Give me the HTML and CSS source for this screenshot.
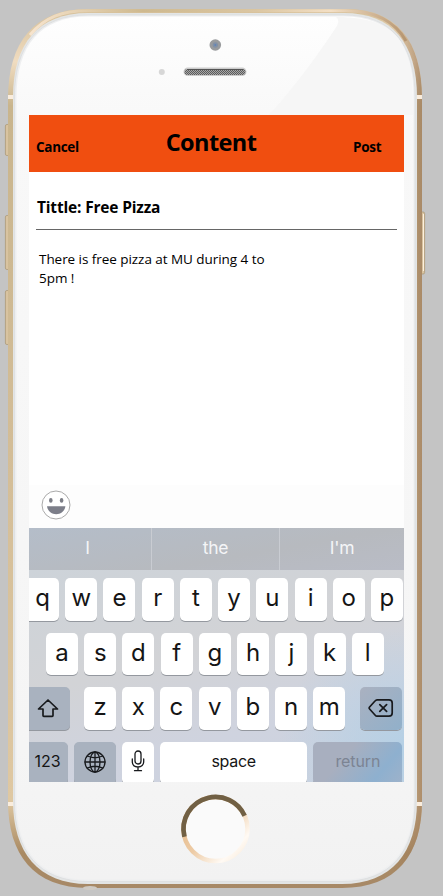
FILE: index.html
```html
<!DOCTYPE html>
<html lang="en">
<head>
<meta charset="utf-8">
<title>Content</title>
<link rel="stylesheet" href="styles.css">
</head>
<body>
<svg class="device" viewBox="0 0 443 896" aria-hidden="true">
  <defs>
    <linearGradient id="gold" x1="0" y1="0" x2="0" y2="1">
      <stop offset="0" stop-color="#d5bf98"/><stop offset=".06" stop-color="#f0dcc0"/><stop offset=".11" stop-color="#c9b58d"/><stop offset=".5" stop-color="#d3bd97"/><stop offset=".9" stop-color="#dfc8a2"/><stop offset=".96" stop-color="#a98a63"/><stop offset="1" stop-color="#a78967"/>
    </linearGradient>
    <linearGradient id="side" x1="0" y1="0" x2="1" y2="0">
      <stop offset="0" stop-color="#9d7a58" stop-opacity="0"/><stop offset=".93" stop-color="#9d7a58" stop-opacity="0"/><stop offset="1" stop-color="#9d7a58" stop-opacity=".75"/>
    </linearGradient>
    <linearGradient id="top" x1="0" y1="0" x2="1" y2="0">
      <stop offset="0" stop-color="#f7e4cd"/><stop offset=".3" stop-color="#ceb98f"/><stop offset=".6" stop-color="#dbc6a2"/><stop offset=".8" stop-color="#f3dfc5"/><stop offset="1" stop-color="#b69570"/>
    </linearGradient>
    <linearGradient id="face" x1="0" y1="0" x2="0" y2="1">
      <stop offset="0" stop-color="#fefefe"/><stop offset=".13" stop-color="#f8f8f8"/><stop offset=".85" stop-color="#f5f5f5"/><stop offset="1" stop-color="#f2f2f2"/>
    </linearGradient>
    <linearGradient id="ring" x1="0" y1="0" x2="1" y2="1">
      <stop offset="0" stop-color="#e2b27e"/><stop offset=".5" stop-color="#edcba5"/><stop offset=".8" stop-color="#fffaf4"/><stop offset="1" stop-color="#f7e6d2"/>
    </linearGradient>
    <pattern id="mesh" width="2" height="2" patternUnits="userSpaceOnUse"><path fill="#a8a8a8" d="M0 0h2v2H0z"/><path fill="#5c5c5c" d="M0 0h1v1H0zM1 1h1v1H1z"/></pattern>
  </defs>
  <g fill="#d8c3a0" stroke="#a89371" stroke-width=".7">
    <rect x="5.4" y="124.5" width="4" height="31" rx="1.5"/><rect x="5.4" y="215.5" width="4" height="54" rx="1.5"/><rect x="5.4" y="290.5" width="4" height="54" rx="1.5"/><rect x="420" y="212" width="4.6" height="62" rx="1.5"/>
  </g>
  <path d="M423.5 214v57" stroke="#fff0dc"/>
  <path d="M8 99C8 42 34 9 88 9H346C396 9 422 40 422 99V801C422 855 396 888 342 888H88C34 888 8 855 8 801Z" fill="url(#gold)"/>
  <path d="M8 99C8 42 34 9 88 9H346C396 9 422 40 422 99V801C422 855 396 888 342 888H88C34 888 8 855 8 801Z" fill="url(#side)"/>
  <path d="M30 35C45 17 62 10.800 88 10.800H346C374 10.800 394 20 406 41" fill="none" stroke="url(#top)" stroke-width="3"/>
  <path d="M8 95h6v4H8zM416 95h6v4h-6zM8 802h6v4H8zM416 802h6v4h-6z" fill="#faeddd"/>
  <path d="M13 97C13 44 38 13 88 13H344C392 13 417 43 417 97V801C417 852 392 884 342 884H88C38 884 13 852 13 801Z" fill="#e3e5e5"/>
  <path d="M14.5 97C14.5 45 39 15 88 15H344C391 15 415 44 415 97V801C415 851 391 881.5 342 881.5H88C39 881.5 14.5 851 14.5 801Z" fill="#eeeff0" stroke="#d9dadb" stroke-width=".6"/>
  <path d="M16.5 97C16.5 46 40 16.5 88 16.5H344C390 16.5 413.5 45 413.5 97V801C413.5 850 390 879.5 342 879.5H88C40 879.5 16.5 850 16.5 801Z" fill="url(#face)"/>
  <path d="M336 17C371 17 396 25 406 52 412 66 413 80 413 115H269Q302 79 337 26Q340 20 336 17Z" fill="#f6f6f6"/>
  <circle cx="215.3" cy="45" r="5.8" fill="#999b9d"/><circle cx="215.3" cy="45" r="2.7" fill="#8190a5"/><circle cx="215.3" cy="45" r="1" fill="#6284b8"/>
  <circle cx="161.8" cy="72" r="3" fill="#d7d7d7"/>
  <rect x="183.5" y="67.5" width="63" height="8.6" rx="4.3" fill="#ccc"/><rect x="184.5" y="69" width="61" height="6" rx="3" fill="url(#mesh)"/><path d="M187 69.500h56" stroke="#555"/>
  <circle cx="215.5" cy="829" r="33" fill="#fafafa"/>
  <circle cx="215.5" cy="829" r="32" fill="none" stroke="url(#ring)" stroke-width="4.5"/>
  <circle cx="215.5" cy="829" r="32" fill="none" stroke="#716044" stroke-width="4.7" stroke-dasharray="94.600 200" transform="rotate(166 215.5 829)"/>
  <ellipse cx="90" cy="888" rx="7" ry="2" fill="#cfcac3"/>
</svg>
<main class="screen">
  <header class="bar">
    <span class="action">Cancel</span>
    <h1>Content</h1>
    <span class="action post">Post</span>
  </header>
  <section class="compose">
    <h2>Tittle: Free Pizza</h2>
    <p>There is free pizza at MU during 4 to<br>5pm !</p>
  </section>
  <div class="emoji">
    <svg width="30" height="30" viewBox="0 0 30 30"><circle cx="15" cy="15" r="14" fill="#fff" stroke="#aaa"/><ellipse cx="9.8" cy="10.4" rx="1.8" ry="2.3" fill="#7c7e86"/><ellipse cx="20.6" cy="10.4" rx="1.8" ry="2.3" fill="#7c7e86"/><path d="M6 16.3H24.4C23.8 21 20 24.2 15.2 24.2S6.600 21 6 16.300Z" fill="#7c7e89"/></svg>
  </div>
  <div class="suggestions"><span>I</span><span>the</span><span>I'm</span></div>
  <div class="keyboard">
    <div class="row first"><kbd class="q">q</kbd><kbd>w</kbd><kbd>e</kbd><kbd>r</kbd><kbd>t</kbd><kbd>y</kbd><kbd>u</kbd><kbd>i</kbd><kbd>o</kbd><kbd>p</kbd></div>
    <div class="row second"><kbd>a</kbd><kbd>s</kbd><kbd>d</kbd><kbd>f</kbd><kbd>g</kbd><kbd>h</kbd><kbd>j</kbd><kbd>k</kbd><kbd>l</kbd></div>
    <div class="row third">
      <kbd class="dark shift"><svg width="22" height="20" viewBox="0 0 22 20"><path d="M11 2 1.500 11H6V17.500Q6 18.300 6.800 18.300H15.200Q16 18.300 16 17.500V11H20.500Z"/></svg></kbd>
      <kbd>z</kbd><kbd>x</kbd><kbd>c</kbd><kbd>v</kbd><kbd>b</kbd><kbd>n</kbd><kbd>m</kbd>
      <kbd class="dark delete"><svg width="26" height="20" viewBox="0 0 26 20"><path d="M9 1.800H21Q24.200 1.800 24.200 5V15Q24.200 18.200 21 18.200H9Q8 18.200 7 17L1.600 11Q.7 10 1.600 9L7 3Q8 1.800 9 1.800ZM11.800 6.600l6.800 6.800M18.600 6.600l-6.800 6.800"/></svg></kbd>
    </div>
    <div class="row fourth">
      <kbd class="dark num">123</kbd>
      <kbd class="dark globe"><svg width="22" height="22" viewBox="0 0 22 22"><circle cx="11" cy="11" r="10"/><ellipse cx="11" cy="11" rx="5" ry="10"/><path d="M11 1v20M1 11h20M3.300 5Q11 8.500 18.700 5M3.300 17Q11 13.500 18.700 17"/></svg></kbd>
      <kbd class="mic"><svg width="14" height="22" viewBox="0 0 14 22"><rect x="4" y="1" width="6" height="13" rx="3"/><path d="M1.300 9v2.500C1.300 15 3.500 17 7 17s5.700-2 5.700-5.500V9M7 17v3.500M3.500 20.700h7"/></svg></kbd>
      <kbd class="space">space</kbd>
      <kbd class="return">return</kbd>
    </div>
  </div>
</main>
</body>
</html>
```
FILE: styles.css
```css
* { box-sizing: border-box; margin: 0; padding: 0; }
body {
  width: 443px;
  height: 896px;
  overflow: hidden;
  padding: 115px 39px 0 29px;
  background: #c4c4c4;
  color: #000;
  font-family: "Open Sans", sans-serif;
}
.device { position: absolute; inset: 0; width: 443px; height: 896px; }
.screen { position: relative; width: 375px; height: 667px; overflow: hidden; background: #fff; }
.bar {
  display: grid;
  grid-template-columns: 110px 144px 1fr;
  height: 57px;
  background: #f04e10;
}
.bar h1 { font-size: 23.500px; line-height: 33px; letter-spacing: -.6px; padding-top: 11px; text-align: center; white-space: nowrap; }
.action { font-size: 13.500px; font-weight: 700; line-height: 20px; padding: 22px 0 0 7px; letter-spacing: -.3px; }
.post { padding-left: 70px; }
.compose { height: 313px; padding: 25px 7px 0; }
.compose h2 { height: 33px; padding-left: 1px; border-bottom: 1px solid #666; font-size: 15.500px; line-height: 21px; letter-spacing: -.17px; }
.compose p { padding: 20px 0 0 3px; font-size: 13.500px; line-height: 19px; letter-spacing: -.05px; }
.emoji { height: 43px; padding: 5px 0 0 12px; background: #fdfdfd; }
.emoji svg { display: block; }
.suggestions {
  display: grid;
  grid-template-columns: 122px 128px 125px;
  height: 42px;
  background: linear-gradient(170deg, #b4bdc9, #b7babf 60%, #b9bcc6);
  color: #f4f5f7;
  font: 17.500px/40px Inter, sans-serif;
  letter-spacing: -.2px;
  text-align: center;
}
.suggestions span + span { border-left: 1px solid #c9ccd2; }
.suggestions span:first-child { padding-right: 5px; }
.keyboard {
  display: grid;
  grid-template-rows: repeat(4, 43px);
  row-gap: 11.500px;
  height: 212px;
  padding-top: 8px;
  overflow: hidden;
  background: radial-gradient(circle at 100% 85%, #b5d0e5, transparent 30%), linear-gradient(165deg, #cdd3d9, #d2d3d6 40%, #cfd3df 70%, #cbd2df);
}
.row { display: flex; column-gap: 6.220px; }
.second { padding-left: 17px; }
kbd {
  display: flex;
  align-items: center;
  justify-content: center;
  flex: none;
  width: 32px;
  height: 42.500px;
  padding-bottom: 3px;
  border-radius: 5px;
  background: #fff;
  box-shadow: 0 1px 0 #94989f;
  color: #151515;
  font: 24px Inter, sans-serif;
}
.q { width: 30px; padding-right: 3px; border-radius: 0 5px 5px 0; }
.dark { background: #a9b2bf; }
.shift { width: 41px; margin-right: 7.800px; padding: 0 3px 0 0; border-radius: 0 5px 5px 0; }
.delete { width: 42.500px; margin-left: 8px; padding: 0; background: linear-gradient(135deg, #aab1c0, #91b0ca); }
.num { width: 39px; padding-right: 2px; border-radius: 0 5px 5px 0; font-size: 16px; }
.globe { width: 41.500px; padding-bottom: 1px; }
.space { width: 147px; font-size: 16px; letter-spacing: -.3px; }
.return { width: 89px; background: linear-gradient(130deg, #a8afbf 35%, #8eb0cf 75%, #9eb2ca); color: #7c8493; font-size: 16px; letter-spacing: -.1px; }
kbd svg { fill: none; stroke: #181a1d; stroke-width: 1.700; stroke-linejoin: round; stroke-linecap: round; }
.globe svg, .mic svg { stroke-width: 1.300; }
```
